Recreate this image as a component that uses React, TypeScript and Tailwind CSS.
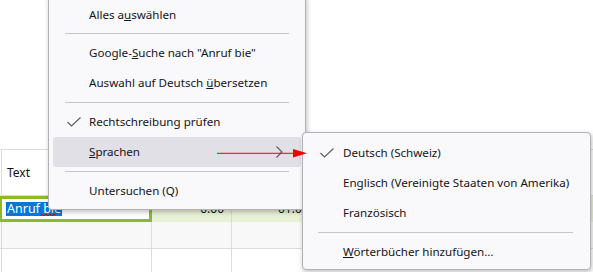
import React from 'react';

const font = { fontFamily: '"Noto Sans", "Open Sans", sans-serif' };

function Check({ className }: { className?: string }) {
  return (
    <svg width="14" height="10" viewBox="0 0 14 10" className={className}>
      <polyline points="0.5,5 4.5,9 13.5,0.5" fill="none" stroke="#5b5b5b" strokeWidth="1.1" />
    </svg>
  );
}

function Sep({ first }: { first?: boolean }) {
  return (
    <div className={first ? 'h-[8px] pt-[3px] px-3' : 'h-[9px] pt-[4px] px-3'}>
      <div className="h-px bg-[#c6c6c8]" />
    </div>
  );
}

function Item({
  children,
  checked,
  active,
  sub,
  checkLeft = 'left-[14px]',
}: {
  children: React.ReactNode;
  checked?: boolean;
  active?: boolean;
  sub?: boolean;
  checkLeft?: string;
}) {
  return (
    <div
      className={`relative h-[30px] flex items-center pl-[36px] text-[11.6px] text-[#15141a] whitespace-nowrap rounded-[3px] ${
        active ? 'bg-[#e0e0e6]' : ''
      }`}
    >
      {checked && <Check className={`absolute ${checkLeft} top-[10px]`} />}
      <span>{children}</span>
      {sub && (
        <svg width="7" height="12" viewBox="0 0 7 12" className="absolute right-[18px] top-[9px]">
          <polyline points="0.5,0.5 6,6 0.5,11.5" fill="none" stroke="#5b5b5b" strokeWidth="1.1" />
        </svg>
      )}
    </div>
  );
}

export default function App() {
  return (
    <div className="relative w-[593px] h-[272px] overflow-hidden bg-white" style={font}>
      {/* spreadsheet behind the menus */}
      <div className="flex flex-col text-[12px] text-[#111] whitespace-nowrap">
        <div className="h-[150px] border-b border-[#dcdcdc]" />
        <div className="flex h-[46px] border-b border-[#dcdcdc]">
          <div className="w-[2px] border-r border-[#dcdcdc]" />
          <div className="w-[150px] border-r border-[#dcdcdc] flex items-center pl-[5px]">Text</div>
          <div className="w-[80px] border-r border-[#dcdcdc]" />
          <div className="flex-1" />
        </div>
        <div className="flex h-[26px]">
          <div className="w-[2px] bg-[#8dbb24]" />
          <div className="w-[150px] border-[3px] border-[#8dbb24] border-l-0 bg-white flex items-center pl-[4px]">
            <span className="relative bg-[#0078d7] text-white text-[12.5px] leading-[14px] px-[1px]">
              Anruf bie
              <svg width="17" height="4" viewBox="0 0 17 4" className="absolute left-[34px] bottom-[-1px]">
                <polyline points="0,3 2,1 4,3 6,1 8,3 10,1 12,3 14,1 16,3" fill="none" stroke="#e00000" strokeWidth="1" />
              </svg>
            </span>
          </div>
          <div className="w-[80px] bg-[#e8f0d6] border-r border-[#d4dcc2] flex items-center justify-end pr-[7px]">
            0.00
          </div>
          <div className="flex-1 bg-[#e8f0d6] flex items-center pl-[46px]">01.01.2024</div>
        </div>
        <div className="flex h-[27px] bg-[#f8f8f8] border-b border-[#dcdcdc]">
          <div className="w-[2px] border-r border-[#dcdcdc]" />
          <div className="w-[150px] border-r border-[#dcdcdc]" />
          <div className="w-[80px] border-r border-[#dcdcdc]" />
          <div className="flex-1" />
        </div>
        <div className="flex h-[30px]">
          <div className="w-[2px] border-r border-[#dcdcdc]" />
          <div className="w-[150px] border-r border-[#dcdcdc]" />
          <div className="w-[80px] border-r border-[#dcdcdc]" />
          <div className="flex-1" />
        </div>
      </div>

      {/* main context menu */}
      <div className="absolute left-[48px] top-[-5px] w-[258px] bg-[#f9f9fb] border border-[#b2b2b6] rounded-[4px] shadow-[1px_2px_5px_rgba(0,0,0,0.25)] pt-[4px] pb-[3px] px-[4px]">
        <Item>
          Alles a<u>u</u>swählen
        </Item>
        <Sep first />
        <Item>
          Google-<u>S</u>uche nach "Anruf bie"
        </Item>
        <Item>
          Auswahl auf Deutsch <u>ü</u>bersetzen
        </Item>
        <Sep />
        <Item checked>Rechtschreibung prüfen</Item>
        <Item active sub>
          <u>S</u>prachen
        </Item>
        <Sep />
        <Item>Untersuchen (Q)</Item>
      </div>

      {/* submenu */}
      <div className="absolute left-[302px] top-[132px] w-[289px] bg-[#f9f9fb] border border-[#b2b2b6] rounded-[4px] shadow-[1px_2px_5px_rgba(0,0,0,0.25)] pt-[5px] pb-[2px] px-[4px]">
        <Item checked checkLeft="left-[13px]">
          Deutsch (Schweiz)
        </Item>
        <Item>Englisch (Vereinigte Staaten von Amerika)</Item>
        <Item>Französisch</Item>
        <div className="h-[9px] pt-[4px] pl-[11px] pr-[13px]">
          <div className="h-px bg-[#c6c6c8]" />
        </div>
        <Item>
          <u>W</u>örterbücher hinzufügen…
        </Item>
      </div>

      {/* red annotation arrow */}
      <svg width="92" height="12" viewBox="0 0 92 12" className="absolute left-[217px] top-[147px]">
        <line x1="0" y1="6.3" x2="78" y2="6.3" stroke="#f00000" strokeWidth="1" />
        <polygon points="76,2 90,6.3 76,10.6" fill="#f00000" />
      </svg>
    </div>
  );
}
